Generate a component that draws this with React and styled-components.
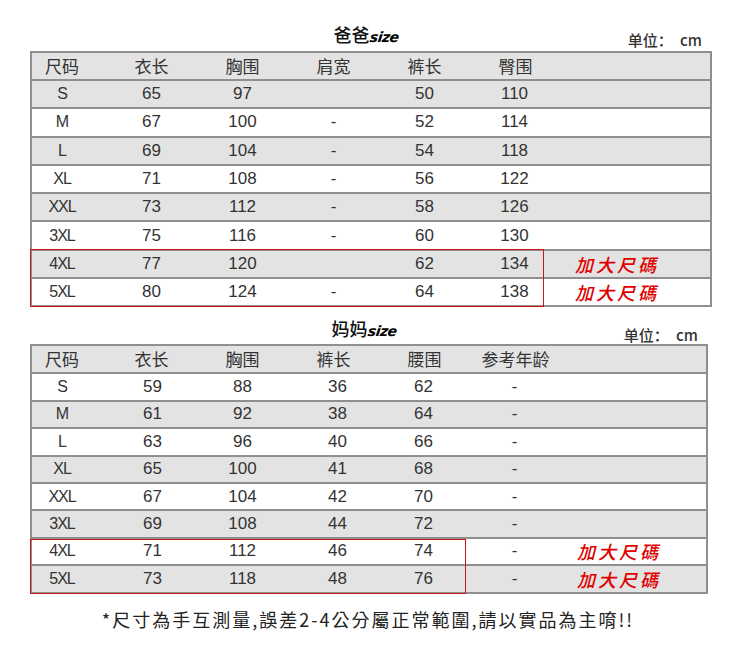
import React from 'react';
import styled, { createGlobalStyle } from 'styled-components';

const Global = createGlobalStyle`
  html, body { margin: 0; padding: 0; background: #fff; }
  body { font-family: "Liberation Sans", "Noto Sans CJK SC", sans-serif; color: #333; }
`;

const Page = styled.div`
  width: 743px;
  height: 647px;
  overflow: hidden;
  display: flex;
  flex-direction: column;
`;

const TitleRow = styled.div`
  height: ${p => p.$h}px;
  display: grid;
  grid-template-columns: 1fr auto 1fr;
  align-items: end;
  padding: 0 ${p => p.$right}px 0 30px;
  box-sizing: border-box;
`;

const Title = styled.div`
  grid-column: 2;
  font-family: "Noto Sans CJK SC", sans-serif;
  font-size: 18px;
  font-weight: 500;
  line-height: 20px;
  color: #111;
  padding-bottom: ${p => p.$pb}px;
  display: flex;
  align-items: baseline;
`;

const Script = styled.span`
  font-family: "DejaVu Sans", sans-serif;
  font-weight: 700;
  font-style: italic;
  font-size: 14px;
  letter-spacing: -0.5px;
  color: #000;
  transform: skewX(-8deg);
  display: inline-block;
`;

const Unit = styled.div`
  grid-column: 3;
  justify-self: end;
  font-family: "Noto Sans CJK SC", sans-serif;
  font-size: 15px;
  font-weight: 500;
  line-height: 18px;
  color: #333;
  word-spacing: 4px;
  padding-bottom: ${p => p.$pb}px;
`;

const Table = styled.div`
  position: relative;
  margin-left: 30px;
  width: ${p => p.$w}px;
  box-sizing: border-box;
  border: 2px solid #8f8f8f;
  border-bottom: none;
`;

const Row = styled.div`
  display: grid;
  grid-template-columns: 74px repeat(5, 91px) 1fr;
  align-items: center;
  height: ${p => p.$h}px;
  box-sizing: border-box;
  background: ${p => (p.$gray ? '#e3e3e3' : '#fff')};
  border-bottom: 2px solid #8f8f8f;
`;

const HeadCell = styled.div`
  text-align: center;
  font-family: "Noto Sans CJK SC", sans-serif;
  font-size: 17px;
  line-height: 20px;
  color: #333;
  padding-left: ${p => Math.max(0, (p.$shift || 0) * 2)}px;
  padding-right: ${p => Math.max(0, -(p.$shift || 0) * 2)}px;
`;

const Cell = styled.div`
  text-align: center;
  font-family: "Liberation Sans", sans-serif;
  font-size: ${p => (p.$size ? 16 : 17)}px;
  letter-spacing: ${p => (p.$size ? -1 : 0)}px;
  line-height: 20px;
  color: #333;
  padding-left: ${p => Math.max(0, (p.$shift || 0) * 2)}px;
  padding-right: ${p => Math.max(0, -(p.$shift || 0) * 2)}px;
`;

const Note = styled.div`
  font-family: "Noto Sans CJK TC", sans-serif;
  font-size: 18px;
  line-height: 20px;
  font-weight: 500;
  color: #e00000;
  letter-spacing: 3px;
  padding-left: ${p => p.$pl}px;
  font-style: italic;
`;

const RedBox = styled.div`
  position: absolute;
  left: -2px;
  bottom: 0;
  width: ${p => p.$w}px;
  height: ${p => p.$h}px;
  box-sizing: border-box;
  border: 1.5px solid #c81818;
  pointer-events: none;
`;

const Footer = styled.div`
  margin-top: 13px;
  text-align: center;
  padding-right: 7px;
  font-family: "Noto Sans CJK TC", sans-serif;
  font-size: 18px;
  line-height: 24px;
  letter-spacing: 2px;
  color: #222;
`;

const dadHead = ['尺码', '衣长', '胸围', '肩宽', '裤长', '臀围'];
const dadRows = [
  ['S', '65', '97', '', '50', '110'],
  ['M', '67', '100', '-', '52', '114'],
  ['L', '69', '104', '-', '54', '118'],
  ['XL', '71', '108', '-', '56', '122'],
  ['XXL', '73', '112', '-', '58', '126'],
  ['3XL', '75', '116', '-', '60', '130'],
  ['4XL', '77', '120', '', '62', '134', true],
  ['5XL', '80', '124', '-', '64', '138', true],
];

const momHead = ['尺码', '衣长', '胸围', '裤长', '腰围', '参考年龄'];
const momRows = [
  ['S', '59', '88', '36', '62', '-'],
  ['M', '61', '92', '38', '64', '-'],
  ['L', '63', '96', '40', '66', '-'],
  ['XL', '65', '100', '41', '68', '-'],
  ['XXL', '67', '104', '42', '70', '-'],
  ['3XL', '69', '108', '44', '72', '-'],
  ['4XL', '71', '112', '46', '74', '-', true],
  ['5XL', '73', '118', '48', '76', '-', true],
];

function SizeTable({ head, rows, width, headH, rowH, grayOdd, shifts, notePl, box }) {
  return (
    <Table $w={width}>
      <Row $h={headH} $gray>
        {head.map((h, i) => (
          <HeadCell key={i} $shift={i === 0 ? -7 : 0}>{h}</HeadCell>
        ))}
        <div />
      </Row>
      {rows.map((r, ri) => (
        <Row key={ri} $h={rowH} $gray={grayOdd ? ri % 2 === 1 : ri % 2 === 0}>
          {r.slice(0, 6).map((v, i) => (
            <Cell key={i} $size={i === 0} $shift={shifts[i]}>{v}</Cell>
          ))}
          {r[6] ? <Note $pl={notePl}>加大尺碼</Note> : <div />}
        </Row>
      ))}
      <RedBox $w={box.w} $h={box.h} />
    </Table>
  );
}

export default function App() {
  return (
    <Page>
      <Global />
      <TitleRow $h={51} $right={41}>
        <Title $pb={4}>爸爸<Script>size</Script></Title>
        <Unit $pb={2}>单位： cm</Unit>
      </TitleRow>
      <SizeTable
        head={dadHead}
        rows={dadRows}
        width={682}
        headH={28}
        rowH={28.3}
        grayOdd={false}
        shifts={[-7, 0, 0, 0, 0, -1]}
        notePl={14}
        box={{ w: 514, h: 58 }}
      />
      <TitleRow $h={37} $right={45}>
        <Title $pb={3}>妈妈<Script>size</Script></Title>
        <Unit $pb={0}>单位： cm</Unit>
      </TitleRow>
      <SizeTable
        head={momHead}
        rows={momRows}
        width={678}
        headH={28}
        rowH={27.4}
        grayOdd={true}
        shifts={[-7, 1, 0, 4, -1, -1]}
        notePl={16}
        box={{ w: 436, h: 55 }}
      />
      <Footer>*尺寸為手互測量,誤差2-4公分屬正常範圍,請以實品為主唷!!</Footer>
    </Page>
  );
}
